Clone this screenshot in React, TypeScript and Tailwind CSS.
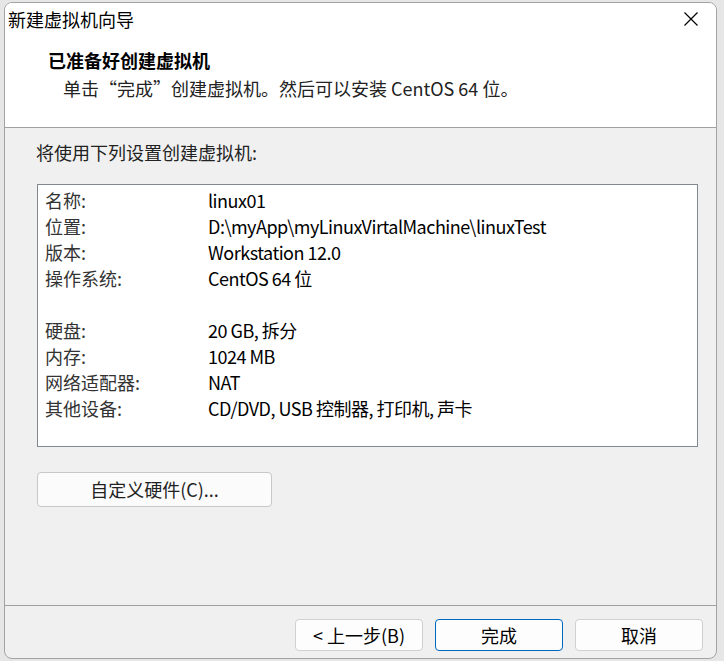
import React from "react";

const FONT = '"Noto Sans CJK SC", "Noto Sans", sans-serif';

type Row = { label: string; value: string } | null;

const ROWS: Row[] = [
  { label: "名称:", value: "linux01" },
  { label: "位置:", value: "D:\\myApp\\myLinuxVirtalMachine\\linuxTest" },
  { label: "版本:", value: "Workstation 12.0" },
  { label: "操作系统:", value: "CentOS 64 位" },
  null,
  { label: "硬盘:", value: "20 GB, 拆分" },
  { label: "内存:", value: "1024 MB" },
  { label: "网络适配器:", value: "NAT" },
  { label: "其他设备:", value: "CD/DVD, USB 控制器, 打印机, 声卡" },
];

function WinButton({ children, primary = false }: { children: React.ReactNode; primary?: boolean }) {
  return (
    <button
      type="button"
      className={`w-[128px] h-[32px] rounded-[4px] bg-[#fdfdfd] text-[18px] leading-[30px] text-black border ${
        primary ? "border-[#0067c0]" : "border-[#d0d0d0]"
      }`}
    >
      {children}
    </button>
  );
}

export default function App() {
  return (
    <div
      className="w-[724px] h-[661px] bg-[#e6e6e6] pl-[4px] pt-[2px] overflow-hidden"
      style={{ fontFamily: FONT }}
    >
      <div className="w-[713px] h-[657px] border border-[#a3a3a3] rounded-lg overflow-hidden flex flex-col bg-[#f0f0f0]">
        {/* 头部：标题栏 + 向导说明 */}
        <div className="h-[125px] bg-white border-b border-[#a0a0a0] shrink-0">
          <div className="h-[32px] flex items-center justify-between pl-[3px] pr-[17px]">
            <span className="text-[18px] leading-[32px] text-black">新建虚拟机向导</span>
            <svg width="16" height="16" viewBox="0 0 16 16" className="text-black">
              <path d="M1.5 1.5 L14.5 14.5 M14.5 1.5 L1.5 14.5" stroke="currentColor" strokeWidth="1.2" fill="none" />
            </svg>
          </div>
          <div className="mt-[12px] pl-[43px] text-[18px] leading-[26px] font-bold text-black">
            已准备好创建虚拟机
          </div>
          <div className="mt-[2px] pl-[58px] text-[18px] leading-[26px] text-[#222]">
            单击“完成”创建虚拟机。然后可以安装 CentOS 64 位。
          </div>
        </div>

        {/* 主体：设置摘要 */}
        <div className="flex-1 pl-[31px] pt-[11px]">
          <div className="text-[18px] leading-[26px] text-[#222]">将使用下列设置创建虚拟机:</div>
          <div className="mt-[19px] ml-[1px] w-[661px] h-[263px] bg-white border border-[#828790] pt-[2px] pl-[7px]">
            {ROWS.map((row, i) =>
              row ? (
                <div key={i} className="flex h-[26px] items-center text-[18px] leading-[26px]">
                  <span className="w-[163px] text-[#333]">{row.label}</span>
                  <span className="text-black tracking-[-0.5px]">{row.value}</span>
                </div>
              ) : (
                <div key={i} className="h-[26px]" />
              )
            )}
          </div>
          <button
            type="button"
            className="mt-[25px] ml-[1px] w-[235px] h-[35px] rounded-[4px] bg-[#fbfbfb] border border-[#c8c8c8] text-[18px] leading-[33px] text-[#222]"
          >
            自定义硬件(C)...
          </button>
        </div>

        {/* 底部按钮 */}
        <div className="h-[53px] border-t border-[#a0a0a0] shrink-0 flex justify-end gap-[12px] pt-[13px] pr-[13px]">
          <WinButton>&lt; 上一步(B)</WinButton>
          <WinButton primary>完成</WinButton>
          <WinButton>取消</WinButton>
        </div>
      </div>
    </div>
  );
}
